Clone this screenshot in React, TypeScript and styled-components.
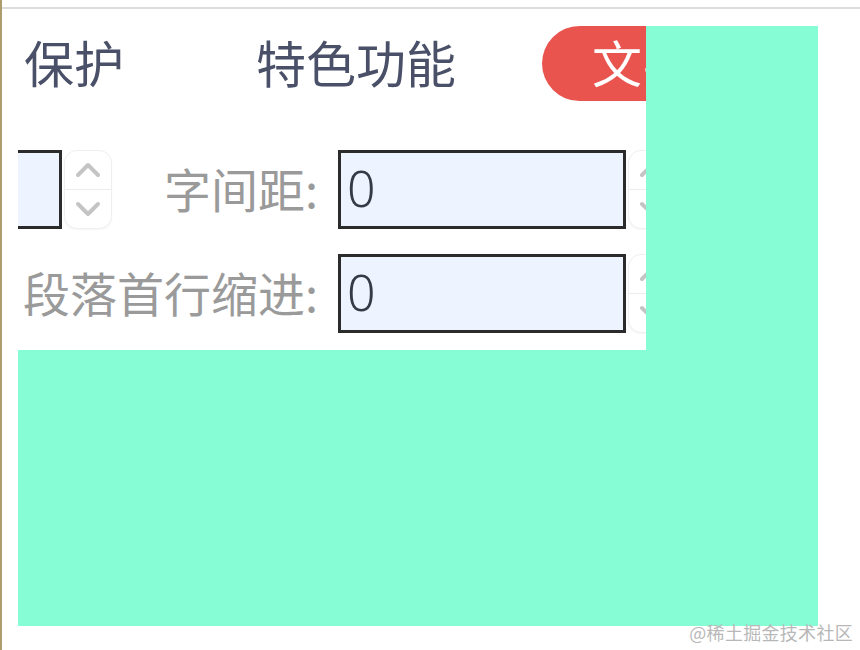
import styled, { createGlobalStyle, css } from "styled-components";

const GlobalStyle = createGlobalStyle`
  html, body {
    margin: 0;
    background: #fff;
  }
  body {
    font-family: "Noto Sans CJK SC", "Noto Sans", sans-serif;
  }
`;

const Page = styled.div`
  position: relative;
  height: 650px;
  box-sizing: border-box;
  border-left: 2px solid #ab9d6c;
  overflow: hidden;
`;

const Rule = styled.div`
  margin-top: 7px;
  height: 2px;
  background: #dcdcdc;
`;

const Stage = styled.div`
  margin: 17px 0 0 16px;
  width: 800px;
  height: 600px;
  background: #86fdd4;
`;

const Panel = styled.div`
  width: 628px;
  height: 324px;
  background: #fff;
  overflow: hidden;
`;

const Tabs = styled.div`
  display: flex;
  align-items: center;
  height: 75px;
  white-space: nowrap;
`;

const Tab = styled.div<{ $active?: boolean; $gap: number }>`
  flex: none;
  margin-left: ${(p) => p.$gap}px;
  height: 75px;
  line-height: 70px;
  font-size: 50px;
  color: #4a5068;
  ${(p) =>
    p.$active &&
    css`
      color: #fff;
      background: #e9544f;
      border-radius: 38px;
      padding: 0 50px;
    `}
`;

const Form = styled.div`
  display: grid;
  grid-template-columns: 94px 226px 288px 50px;
  grid-auto-rows: 79px;
  row-gap: 25px;
  margin-top: 49px;
`;

const Label = styled.div<{ $wide?: boolean }>`
  grid-column: ${(p) => (p.$wide ? "1 / 3" : "2 / 3")};
  display: flex;
  align-items: center;
  justify-content: flex-end;
  padding-right: 20px;
  padding-bottom: 4px;
  font-size: 47px;
  color: #9a9a9a;
  white-space: nowrap;
`;

const Field = styled.div<{ $col: string }>`
  grid-column: ${(p) => p.$col};
  display: flex;
  justify-content: flex-end;
  gap: 2px;
`;

const NumberBox = styled.input`
  flex: none;
  width: 288px;
  height: 79px;
  box-sizing: border-box;
  margin: 0;
  padding: 0 0 4px 6px;
  border: 3px solid #2b2b2b;
  background: #edf4ff;
  font-family: "Noto Sans", sans-serif;
  font-weight: 300;
  font-size: 50px;
  color: #353a44;
  outline: none;
`;

const Spinner = styled.div`
  flex: none;
  width: 48px;
  height: 79px;
  box-sizing: border-box;
  display: flex;
  flex-direction: column;
  border: 1.5px solid #efefef;
  border-radius: 13px;
  background: #fff;
  box-shadow: 0 1px 2px rgba(0, 0, 0, 0.04);
`;

const SpinHalf = styled.div<{ $down?: boolean }>`
  flex: 1;
  display: flex;
  align-items: center;
  justify-content: center;
  ${(p) => p.$down && "border-top: 1.5px solid #ececec;"}
`;

const Watermark = styled.div`
  position: absolute;
  right: 7px;
  bottom: 5px;
  font-size: 18px;
  color: #b8b8b8;
  letter-spacing: 0.3px;
`;

const Chevron = ({ down }: { down?: boolean }) => (
  <svg width="26" height="18" viewBox="0 0 26 18">
    <polyline
      points={down ? "3,4 13,14 23,4" : "3,14 13,4 23,14"}
      fill="none"
      stroke="#c4c4c4"
      strokeWidth="4"
      strokeLinecap="round"
      strokeLinejoin="round"
    />
  </svg>
);

const NumberField = ({ col }: { col: string }) => (
  <Field $col={col}>
    <NumberBox type="text" defaultValue="0" readOnly />
    <Spinner>
      <SpinHalf>
        <Chevron />
      </SpinHalf>
      <SpinHalf $down>
        <Chevron down />
      </SpinHalf>
    </Spinner>
  </Field>
);

export default function App() {
  return (
    <>
      <GlobalStyle />
      <Page>
        <Rule />
        <Stage>
          <Panel>
            <Tabs>
              <Tab $gap={6}>保护</Tab>
              <Tab $gap={132}>特色功能</Tab>
              <Tab $gap={86} $active>
                文字样式
              </Tab>
            </Tabs>
            <Form>
              <NumberField col="1 / 2" />
              <Label>字间距:</Label>
              <NumberField col="3 / 5" />
              <Label $wide>段落首行缩进:</Label>
              <NumberField col="3 / 5" />
            </Form>
          </Panel>
        </Stage>
        <Watermark>@稀土掘金技术社区</Watermark>
      </Page>
    </>
  );
}
